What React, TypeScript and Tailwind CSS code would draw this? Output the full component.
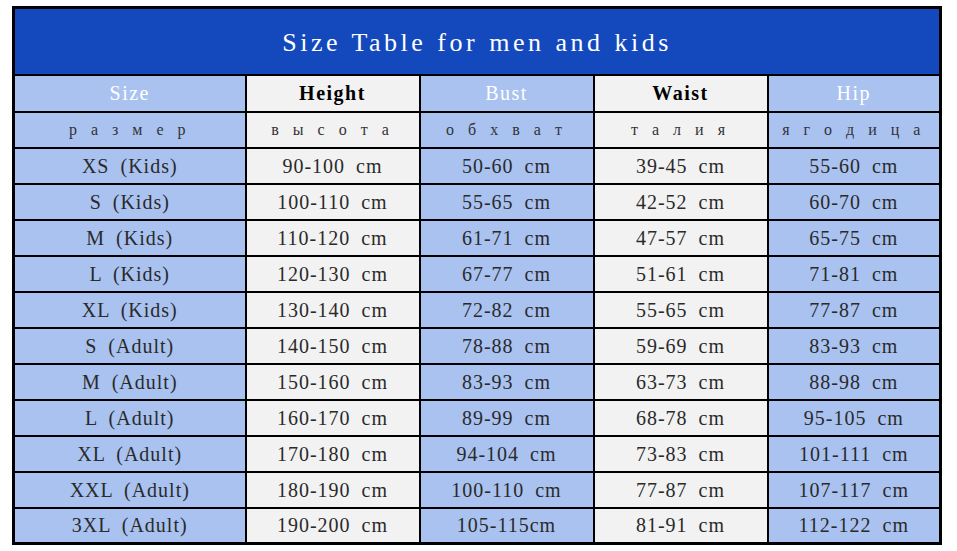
const headers = [
  { en: "Size", ru: "р а з м е р", gray: false },
  { en: "Height", ru: "в ы с о т а", gray: true },
  { en: "Bust", ru: "о б х в а т", gray: false },
  { en: "Waist", ru: "т а л и я", gray: true },
  { en: "Hip", ru: "я г о д и ц а", gray: false },
]

const rows = [
  ["XS (Kids)", "90-100 cm", "50-60 cm", "39-45 cm", "55-60 cm"],
  ["S (Kids)", "100-110 cm", "55-65 cm", "42-52 cm", "60-70 cm"],
  ["M (Kids)", "110-120 cm", "61-71 cm", "47-57 cm", "65-75 cm"],
  ["L (Kids)", "120-130 cm", "67-77 cm", "51-61 cm", "71-81 cm"],
  ["XL (Kids)", "130-140 cm", "72-82 cm", "55-65 cm", "77-87 cm"],
  ["S (Adult)", "140-150 cm", "78-88 cm", "59-69 cm", "83-93 cm"],
  ["M (Adult)", "150-160 cm", "83-93 cm", "63-73 cm", "88-98 cm"],
  ["L (Adult)", "160-170 cm", "89-99 cm", "68-78 cm", "95-105 cm"],
  ["XL (Adult)", "170-180 cm", "94-104 cm", "73-83 cm", "101-111 cm"],
  ["XXL (Adult)", "180-190 cm", "100-110 cm", "77-87 cm", "107-117 cm"],
  ["3XL (Adult)", "190-200 cm", "105-115cm", "81-91 cm", "112-122 cm"],
]

const widths = ["w-[232px]", "w-[174px]", "w-[174px]", "w-[174px]", "w-[173px]"]

export default function App() {
  return (
    <div className="h-[551px] w-[957px] bg-white pl-[12px] pt-[6px] font-['Liberation_Serif',serif]">
      <table className="w-[927px] table-fixed border-collapse border-[3px] border-black">
        <colgroup>
          {widths.map((w, i) => (
            <col key={i} className={w} />
          ))}
        </colgroup>
        <tbody>
          <tr className="h-[67px] bg-[#1449bd]">
            <td colSpan={5} className="border-2 border-black pt-[3px] text-center text-[26px] tracking-[3.5px] [word-spacing:1px] text-white">
              Size Table for men and kids
            </td>
          </tr>
          <tr className="h-[37px]">
            {headers.map(h => (
              <td
                key={h.en}
                className={`border-2 border-black text-center text-[20px] tracking-[1.5px] ${
                  h.gray ? "bg-[#f2f2f2] font-bold text-black" : "bg-[#a9c2f0] text-white"
                }`}
              >
                {h.en}
              </td>
            ))}
          </tr>
          <tr className="h-[36px]">
            {headers.map(h => (
              <td
                key={h.ru}
                className={`border-2 border-black text-center text-[16px] tracking-[5px] text-[#333] ${
                  h.gray ? "bg-[#f2f2f2]" : "bg-[#a9c2f0]"
                }`}
              >
                {h.ru}
              </td>
            ))}
          </tr>
          {rows.map(r => (
            <tr key={r[0]} className="h-[36px]">
              {r.map((c, i) => (
                <td
                  key={i}
                  className={`border-2 border-black text-center text-[20px] tracking-[1px] [word-spacing:5px] text-[#2a2a2a] ${
                    i % 2 === 1 ? "bg-[#f2f2f2]" : "bg-[#a9c2f0]"
                  }`}
                >
                  {c}
                </td>
              ))}
            </tr>
          ))}
        </tbody>
      </table>
    </div>
  )
}
